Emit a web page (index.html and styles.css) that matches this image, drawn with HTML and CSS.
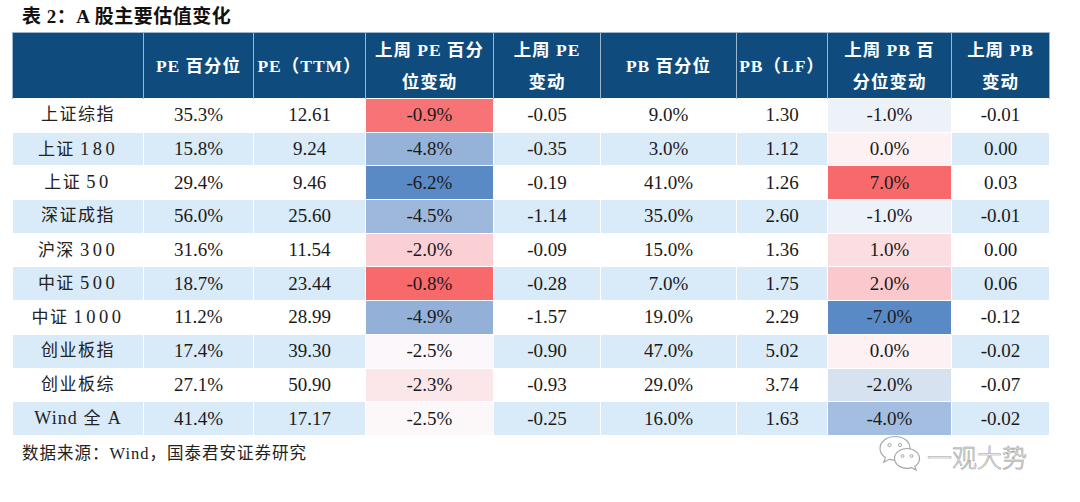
FILE: index.html
```html
<!DOCTYPE html>
<html lang="zh">
<head>
<meta charset="utf-8">
<title>A 股主要估值变化</title>
<link rel="stylesheet" href="styles.css">
</head>
<body>
<div class="page">
  <div class="title">表 2：A 股主要估值变化</div>
  <table class="val">
    <colgroup>
      <col class="c0"><col class="c1"><col class="c2"><col class="c3"><col class="c4"><col class="c5"><col class="c6"><col class="c7"><col class="c8">
    </colgroup>
    <thead>
      <tr>
        <th></th>
        <th>PE 百分位</th>
        <th>PE（TTM）</th>
        <th>上周 PE 百分<br>位变动</th>
        <th>上周 PE<br>变动</th>
        <th>PB 百分位</th>
        <th>PB（LF）</th>
        <th>上周 PB 百<br>分位变动</th>
        <th>上周 PB<br>变动</th>
      </tr>
    </thead>
    <tbody>
      <tr><td class="lbl">上证综指</td><td>35.3%</td><td>12.61</td><td style="background:#f87375">-0.9%</td><td>-0.05</td><td>9.0%</td><td>1.30</td><td style="background:#edf2f9">-1.0%</td><td>-0.01</td></tr>
      <tr><td class="lbl">上证<span class="dg">180</span></td><td>15.8%</td><td>9.24</td><td style="background:#95b3d8">-4.8%</td><td>-0.35</td><td>3.0%</td><td>1.12</td><td style="background:#fdf1f4">0.0%</td><td>0.00</td></tr>
      <tr><td class="lbl">上证<span class="dg">50</span></td><td>29.4%</td><td>9.46</td><td style="background:#5a8ac6">-6.2%</td><td>-0.19</td><td>41.0%</td><td>1.26</td><td style="background:#f8696b">7.0%</td><td>0.03</td></tr>
      <tr><td class="lbl">深证成指</td><td>56.0%</td><td>25.60</td><td style="background:#9db8db">-4.5%</td><td>-1.14</td><td>35.0%</td><td>2.60</td><td style="background:#edf2f9">-1.0%</td><td>-0.01</td></tr>
      <tr><td class="lbl">沪深<span class="dg">300</span></td><td>31.6%</td><td>11.54</td><td style="background:#fbd0d4">-2.0%</td><td>-0.09</td><td>15.0%</td><td>1.36</td><td style="background:#fcdee2">1.0%</td><td>0.00</td></tr>
      <tr><td class="lbl">中证<span class="dg">500</span></td><td>18.7%</td><td>23.44</td><td style="background:#f8696b">-0.8%</td><td>-0.28</td><td>7.0%</td><td>1.75</td><td style="background:#fbc9cd">2.0%</td><td>0.06</td></tr>
      <tr><td class="lbl">中证<span class="dg">1000</span></td><td>11.2%</td><td>28.99</td><td style="background:#93b1d8">-4.9%</td><td>-1.57</td><td>19.0%</td><td>2.29</td><td style="background:#5a8ac6">-7.0%</td><td>-0.12</td></tr>
      <tr><td class="lbl">创业板指</td><td>17.4%</td><td>39.30</td><td style="background:#fcf7fa">-2.5%</td><td>-0.90</td><td>47.0%</td><td>5.02</td><td style="background:#fdf1f4">0.0%</td><td>-0.02</td></tr>
      <tr><td class="lbl">创业板综</td><td>27.1%</td><td>50.90</td><td style="background:#fbe6ea">-2.3%</td><td>-0.93</td><td>29.0%</td><td>3.74</td><td style="background:#d7e2f1">-2.0%</td><td>-0.07</td></tr>
      <tr><td class="lbl"><span class="en">Wind</span> 全 <span class="en">A</span></td><td>41.4%</td><td>17.17</td><td style="background:#fcf8fa">-2.5%</td><td>-0.25</td><td>16.0%</td><td>1.63</td><td style="background:#a4bee1">-4.0%</td><td>-0.02</td></tr>
    </tbody>
  </table>
  <div class="source">数据来源：Wind，国泰君安证券研究</div>
  <div class="mark">
    <svg class="wx" width="44" height="38" viewBox="0 0 44 38" aria-hidden="true">
      <path d="M17 2.5c-8.3 0-15 5.4-15 12 0 3.7 2 6.9 5.3 9.1l-1.5 4.6 5.4-2.9c1.8.5 3.8.8 5.8.8 8.3 0 15-5.4 15-12s-6.7-11.6-15-11.6z" fill="#fff" stroke="#a8a8a8" stroke-width="1.2"/>
      <circle cx="11.5" cy="11" r="1.6" fill="none" stroke="#a8a8a8" stroke-width="1"/>
      <circle cx="22" cy="11" r="1.6" fill="none" stroke="#a8a8a8" stroke-width="1"/>
      <path d="M29 14.5c-6.9 0-12.5 4.4-12.5 9.9s5.6 9.9 12.5 9.9c1.6 0 3.1-.2 4.5-.7l4.6 2.5-1.2-3.9c2.8-1.8 4.6-4.6 4.6-7.8 0-5.5-5.6-9.9-12.5-9.9z" fill="#fff" stroke="#a8a8a8" stroke-width="1.2"/>
      <circle cx="24.5" cy="22" r="1.4" fill="none" stroke="#a8a8a8" stroke-width="1"/>
      <circle cx="33.5" cy="22" r="1.4" fill="none" stroke="#a8a8a8" stroke-width="1"/>
    </svg>
    <span class="mark-text">一观大势</span>
  </div>
</div>
</body>
</html>
```

FILE: styles.css
```css
html, body {
  margin: 0;
  padding: 0;
  background: #ffffff;
}

.page {
  position: relative;
  width: 1080px;
  height: 502px;
  padding-left: 12px;
  box-sizing: border-box;
  font-family: "Liberation Serif", "Noto Sans CJK SC", serif;
  color: #1a1a1a;
}

.title {
  height: 32px;
  line-height: 33px;
  padding-left: 10px;
  font-size: 19px;
  font-weight: bold;
  color: #111;
  letter-spacing: 0.5px;
}

.val {
  width: 1037px;
  table-layout: fixed;
  border-collapse: collapse;
}

.c0 { width: 131px; }
.c1 { width: 110px; }
.c2 { width: 112px; }
.c3 { width: 128px; }
.c4 { width: 107px; }
.c5 { width: 136px; }
.c6 { width: 91px; }
.c7 { width: 124px; }
.c8 { width: 98px; }

.val th {
  height: 65px;
  padding: 0;
  background: #0f4c7d;
  color: #ffffff;
  font-size: 17.5px;
  font-weight: bold;
  line-height: 32px;
  letter-spacing: 1px;
  text-align: center;
  border: 1.5px solid #9bb6cf;
  border-bottom: none;
}

.val td {
  height: 32.7px;
  padding: 0;
  text-align: center;
  font-size: 19px;
  line-height: 20px;
  border: 1.5px solid #ffffff;
}

.val tbody tr:nth-child(even) td {
  background: #d9eaf8;
}

.val td.lbl {
  font-size: 17px;
  letter-spacing: 1.5px;
  color: #222;
}

.dg {
  font-family: "Liberation Serif", serif;
  font-size: 18.5px;
  letter-spacing: 3.5px;
  margin-left: 5px;
}

.en {
  font-family: "Liberation Serif", serif;
  font-size: 18px;
  letter-spacing: 1px;
}

.source {
  padding-left: 10px;
  height: 36px;
  line-height: 36px;
  font-size: 16.5px;
  letter-spacing: 1px;
  color: #222;
}

.mark {
  position: absolute;
  left: 878px;
  top: 432px;
  display: flex;
  align-items: center;
  gap: 5px;
}

.wx {
  display: block;
}

.mark-text {
  font-family: "Noto Sans CJK SC", sans-serif;
  font-size: 25px;
  font-weight: 300;
  color: #ffffff;
  -webkit-text-stroke: 0.6px #9a9a9a;
  margin-top: 6px;
}
```
